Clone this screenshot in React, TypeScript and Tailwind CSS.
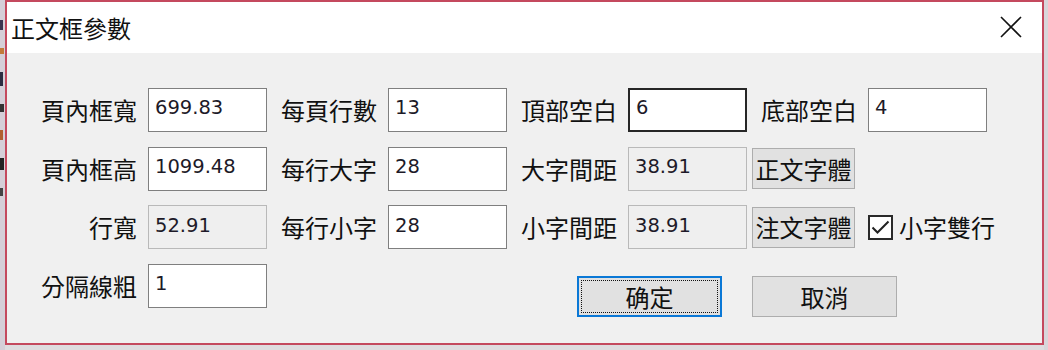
import React from "react";

const cjk = { fontFamily: '"Noto Sans CJK TC", "Noto Sans CJK SC", sans-serif' };
const num = { fontFamily: '"DejaVu Sans", "Liberation Sans", sans-serif' };

function Label({ children }: { children: React.ReactNode }) {
  return (
    <div
      className="w-[95px] h-[44px] flex items-center justify-end text-[24px] leading-none text-[#111] whitespace-nowrap"
      style={cjk}
    >
      {children}
    </div>
  );
}

function Field({ value, kind = "normal" }: { value: string; kind?: "normal" | "disabled" | "focus" }) {
  const cls =
    kind === "disabled"
      ? "bg-[#efefef] border border-[#b9b9b9]"
      : kind === "focus"
      ? "bg-white border-2 border-[#262626]"
      : "bg-white border border-[#7f7f7f]";
  return (
    <div className={`w-[119px] h-[44px] flex items-center pl-[6px] pb-[4px] ${cls}`}>
      <span className="text-[19.5px] leading-none text-[#1d1a28]" style={num}>
        {value}
      </span>
    </div>
  );
}

function Pair({ label, value, kind }: { label: string; value: string; kind?: "normal" | "disabled" | "focus" }) {
  return (
    <div className="flex items-center gap-[11px]">
      <Label>{label}</Label>
      <Field value={value} kind={kind} />
    </div>
  );
}

function FontButton({ children }: { children: React.ReactNode }) {
  return (
    <div
      className="ml-[5px] w-[103px] h-[41px] flex items-center justify-center bg-[#e1e1e1] border border-[#adadad] text-[24px] leading-none text-[#111]"
      style={cjk}
    >
      {children}
    </div>
  );
}

export default function App() {
  return (
    <div className="w-[1048px] h-[350px] bg-[#dedcdf] flex overflow-hidden">
      <div className="w-[5px] h-full bg-[#d5cfd8] flex flex-col gap-[18px] pt-[20px]">
        <div className="h-[10px] w-[3px] bg-[#3a3550]" />
        <div className="h-[6px] w-[4px] bg-[#c27a3a]" />
        <div className="h-[14px] w-[3px] bg-[#2c2c40]" />
        <div className="h-[8px] w-[4px] bg-[#333]" />
        <div className="h-[10px] w-[3px] bg-[#b06030]" />
        <div className="h-[12px] w-[4px] bg-[#222]" />
        <div className="h-[8px] w-[3px] bg-[#444]" />
      </div>
      <div className="w-[1039px] h-[345px] border-2 border-[#c4495e] flex flex-col">
        {/* title bar */}
        <div className="h-[51px] bg-white flex items-center justify-between pl-[4px] pr-[20px]">
          <span className="text-[24px] leading-none text-[#111]" style={cjk}>
            正文框參數
          </span>
          <svg width="22" height="22" viewBox="0 0 22 22" className="mb-[2px]">
            <path d="M1 1 L21 21 M21 1 L1 21" stroke="#111" strokeWidth="1.6" fill="none" />
          </svg>
        </div>
        {/* body */}
        <div className="flex-1 bg-[#f0f0f0] pl-[35px] pt-[35px] flex flex-col gap-[14.7px]">
          <div className="flex items-center gap-[15px]">
            <Pair label="頁內框寬" value="699.83" />
            <Pair label="每頁行數" value="13" />
            <Pair label="頂部空白" value="6" kind="focus" />
            <Pair label="底部空白" value="4" />
          </div>
          <div className="flex items-center gap-[15px]">
            <Pair label="頁內框高" value="1099.48" />
            <Pair label="每行大字" value="28" />
            <div className="flex items-center">
              <Pair label="大字間距" value="38.91" kind="disabled" />
              <FontButton>正文字體</FontButton>
            </div>
          </div>
          <div className="flex items-center gap-[15px]">
            <Pair label="行寬" value="52.91" kind="disabled" />
            <Pair label="每行小字" value="28" />
            <div className="flex items-center">
              <Pair label="小字間距" value="38.91" kind="disabled" />
              <FontButton>注文字體</FontButton>
              <div className="ml-[13px] w-[25px] h-[25px] border-2 border-[#2a2a2a] bg-white flex items-center justify-center">
                <svg width="19" height="15" viewBox="0 0 19 15">
                  <path d="M1.5 7.5 L6.5 12.5 L17.5 1.5" stroke="#222" strokeWidth="2" fill="none" />
                </svg>
              </div>
              <span className="ml-[6px] text-[24px] leading-none text-[#111]" style={cjk}>
                小字雙行
              </span>
            </div>
          </div>
          <div className="flex items-start">
            <Pair label="分隔線粗" value="1" />
            <div className="ml-[310px] mt-[12px] w-[145px] h-[41px] border-2 border-[#0a78d6] bg-[#e1e1e1] p-[2px]">
              <div
                className="w-full h-full border border-dotted border-[#111] flex items-center justify-center text-[24px] leading-none text-[#111]"
                style={cjk}
              >
                确定
              </div>
            </div>
            <div
              className="ml-[30px] mt-[12px] w-[145px] h-[41px] border border-[#adadad] bg-[#e1e1e1] flex items-center justify-center text-[24px] leading-none text-[#111]"
              style={cjk}
            >
              取消
            </div>
          </div>
        </div>
      </div>
      <div className="flex-1 h-full bg-[#d8d6da]" />
    </div>
  );
}
